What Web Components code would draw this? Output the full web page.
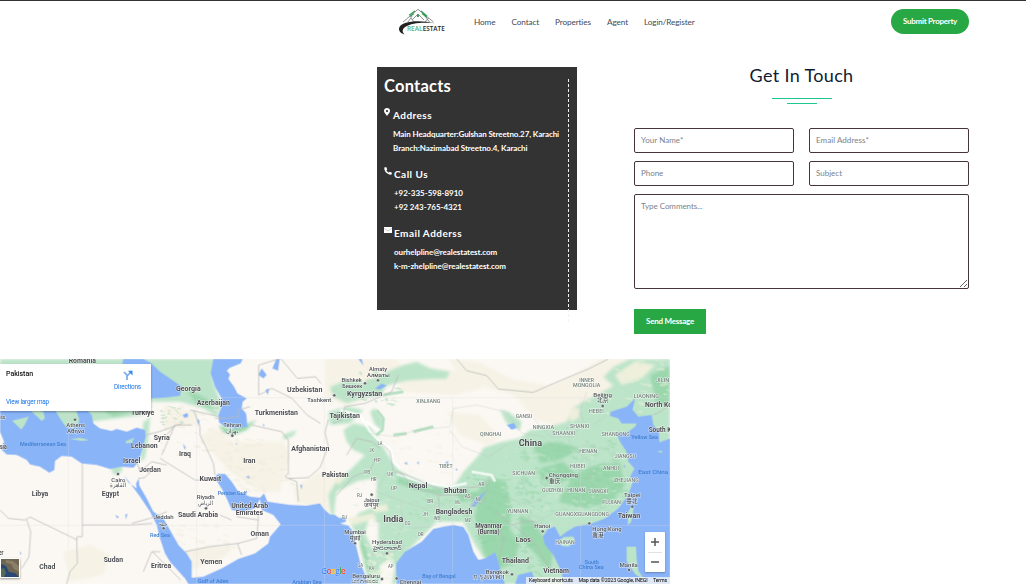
<!DOCTYPE html>
<html lang="en">
<head>
<meta charset="utf-8">
<title>Real Estate - Contact</title>
<style>
html,body{margin:0;padding:0;background:#fff}
body{font-family:Lato,"Open Sans",sans-serif;width:1026px;height:584px;overflow:hidden;color:#333}
</style>
</head>
<body>
<contact-page></contact-page>
<script>
// Text run whose tracking is adjusted to fill a given width.
class FitText extends HTMLElement{
  connectedCallback(){
    const w=parseFloat(this.getAttribute('w'));
    const r=this.attachShadow({mode:'open'});
    r.innerHTML=`<style>:host{display:inline-block;width:${w}px;white-space:nowrap}span{display:inline-block}</style><span><slot></slot></span>`;
    const s=r.querySelector('span');
    const n=this.textContent.length;
    s.style.letterSpacing='0px';
    const natural=s.getBoundingClientRect().width;
    s.style.letterSpacing=((w-natural)/n)+'px';
  }
}
customElements.define('fit-text',FitText);

const define=(name,html)=>customElements.define(name,class extends HTMLElement{
  constructor(){super();this.attachShadow({mode:'open'}).innerHTML=html;}
});

define('brand-logo',`<style>:host{display:block;width:50px;height:28px}svg{display:block}</style>
<svg width="50" height="28" viewBox="0 0 50 28" fill="none">
<path d="M5 14 20 1.300 35.500 14M10 14 14 8M16 14l-3-4M27 14l3.500-4M31.500 14 27 8M14 12l6-6 6 6" stroke="#777" stroke-width=".8"/>
<path d="M11 7.200 17 3M23 3l6 5M12 8.500l4-3M24 5.500l5 4" stroke="#3b9d57" stroke-width="1.100"/>
<path d="M19 6.500h2v2.500H19z" fill="#3b9d57"/>
<path d="M37 15.300C24 12 2 12.300 1 20.500c-.2 3 2.200 5 5.500 6C0 20 12 13 37 15.300Z" fill="#222"/>
<g font-family="Open Sans,sans-serif" font-weight="600" font-size="6.600"><text x="9" y="23.300" textLength="15.500" lengthAdjust="spacingAndGlyphs" fill="#59b36f">REAL</text><text x="24.700" y="23.300" textLength="22" lengthAdjust="spacingAndGlyphs" fill="#222">ESTATE</text></g>
</svg>`);

define('site-header',`<style>
:host{display:flex;align-items:center;box-sizing:border-box;height:42px;margin-bottom:2px;border-top:1px solid #333;padding:0 57px 0 398px}
nav{display:flex;gap:16px;margin-left:26px;font-size:8.200px;line-height:14px;color:#414b55;flex:1}
.btn{box-sizing:border-box;width:78px;height:25px;border:0;border-radius:13px;background:#28a745;color:#fff;font:700 8px/25px Lato,sans-serif;padding:0 12px;text-align:left}
</style>
<brand-logo></brand-logo>
<nav><fit-text w="21.500">Home</fit-text><fit-text w="27.500">Contact</fit-text><fit-text w="36">Properties</fit-text><fit-text w="21">Agent</fit-text><fit-text w="50.500">Login/Register</fit-text></nav>
<button class="btn"><fit-text w="54">Submit Property</fit-text></button>`);

define('contact-group',`<style>
:host{display:grid;grid-template-columns:var(--indent,10px) 1fr;margin-bottom:9px}
.icon{padding-top:3px;height:12px}
h3{margin:0 0 2px;font:700 10px/20px Lato,sans-serif;height:20px}
.lines{grid-column:2;font-weight:700;font-size:8px;line-height:14px;display:flex;flex-direction:column}
</style><div class="icon"><slot name="icon"></slot></div><h3><slot name="title"></slot></h3><div class="lines"><slot></slot></div>`);

define('contacts-panel',`<style>
:host{display:flex;align-items:flex-start;width:200px;height:243px;background:#333;color:#fff}
.body{box-sizing:border-box;width:191px;padding-left:7px}
h2{margin:0;font:700 16.500px/38px Lato,sans-serif}
.rule{margin-top:12px;height:243px;border-left:1px dashed #f2f2f2}
svg{display:block}
contact-group{--indent:10px}contact-group:first-of-type{--indent:9px}
</style>
<div class="body"><h2><fit-text w="67">Contacts</fit-text></h2>
<contact-group><svg slot="icon" width="6" height="8" viewBox="0 0 6 8"><path fill="#fff" fill-rule="evenodd" d="M3 0a3 3 0 0 1 3 3c0 1.800-2 3.200-3 5C2 6.200 0 4.800 0 3a3 3 0 0 1 3-3Zm0 2a1.100 1.100 0 1 0 0 2.200A1.100 1.100 0 0 0 3 2Z"/></svg><fit-text slot="title" w="39">Address</fit-text><fit-text w="166">Main Headquarter:Gulshan Streetno.27, Karachi</fit-text><fit-text w="134.500">Branch:Nazimabad Streetno.4, Karachi</fit-text></contact-group>
<contact-group><svg slot="icon" width="8" height="8" viewBox="0 0 8 8"><path fill="#fff" d="M.3.5 2.200 0l1.100 2.400-1 .9c.5 1 1.300 1.800 2.400 2.400l.9-1L8 5.800 7.500 7.600C3.500 8 0 4.500.3.500Z"/></svg><fit-text slot="title" w="34">Call Us</fit-text><fit-text w="69">+92-335-598-8910</fit-text><fit-text w="68">+92 243-765-4321</fit-text></contact-group>
<contact-group><svg slot="icon" width="8" height="8" viewBox="0 0 8 8"><path fill="#fff" d="M0 1h8v6H0z"/><path d="M0 2.300 4 5l4-2.700" fill="none" stroke="#bbb" stroke-width=".7"/></svg><fit-text slot="title" w="68">Email Adderss</fit-text><fit-text w="103">ourhelpline@realestatest.com</fit-text><fit-text w="112">k-m-zhelpline@realestatest.com</fit-text></contact-group>
</div><div class="rule"></div>`);

define('message-form',`<style>
:host{display:flex;flex-direction:column;width:335px}
h2{align-self:center;margin:0;font:400 18px/24px Lato,sans-serif;color:#101c30}
.bars{display:flex;flex-direction:column;align-items:center;gap:4px;margin:11px 0 24px}
.bars i{height:1px;width:60px;background:#1dc78b}.bars i+i{width:30px}
form{display:grid;grid-template-columns:160px 160px;column-gap:15px;row-gap:8px}
input,textarea{box-sizing:border-box;width:100%;height:25px;margin:0;border:1px solid #453539;border-radius:2px;background:#fff;padding:0 6px 2px;font:8px/14px Lato,sans-serif;outline:0;display:block}
textarea{grid-column:1/3;height:95px;padding:4px 6px}
::placeholder{color:#7b828a;opacity:1}
.send{width:72px;height:25px;border:0;padding:0 12px;margin-top:12px;background:#28a745;color:#fff;font:700 8px/25px Lato,sans-serif;text-align:left}
</style>
<h2><fit-text w="104">Get In Touch</fit-text></h2><div class="bars"><i></i><i></i></div>
<form><input placeholder="Your Name*" style="letter-spacing:.05px"><input placeholder="Email Address*" style="letter-spacing:.05px"><input placeholder="Phone" style="letter-spacing:-.03px"><input placeholder="Subject"><textarea placeholder="Type Comments..." style="letter-spacing:-.05px"></textarea>
<button class="send" type="button"><fit-text w="48">Send Message</fit-text></button></form>`);

// Map labels: [text, left+half width, baseline y, width, style]. Units are thirds of a pixel.
const labels=[
['Romania',247,23,82],['Türkiye',428,180,70],['Syria',485,256,48],['Lebanon',433,280,80],['Israel',395,325,52],['Jordan',450,352,65],['Libya',120,423,50],['Egypt',331,423,52],['Sudan',340,621,58],['Chad',142,643,48],['Eritrea',483,638,60],['sia',10,283,20],['is',9,192,16,'c'],['er',3,600,14],
['Athens',227,216,56,'c'],['Αθήνα',227,234,52,'c'],['Cairo',355,380,42,'c'],['القاهرة',355,397,48,'c'],['Mediterranean Sea',129,273,138,'w'],
['Georgia',565,108,74],['Azerbaijan',640,149,100],['Turkmenistan',829,179,130],['Uzbekistan',914,112,106],['Tashkent',958,141,72,'c'],['Tehran',697,215,54,'c'],['تهران',697,235,38,'c'],['Iraq',555,304,36],['Iran',748,324,37],['Afghanistan',931,288,115],['Kuwait',631,379,65],['Riyadh',617,432,54,'c'],['الرياض',617,450,46,'c'],['Saudi Arabia',594,487,120],['United Arab',749,459,111],['Emirates',748,480,82],['Oman',779,544,55],['Yemen',634,628,66],['Jeddah',491,492,60,'c'],['جدة',490,512,28,'c'],['Persian Gulf',697,420,88,'w'],['Red Sea',480,547,60,'w'],['Gulf of Aden',640,683,92,'w'],['Arabian Sea',921,686,88,'w'],
['Almaty',1134,48,54,'c'],['Алматы',1135,66,68,'c'],['Bishkek',1055,81,61,'c'],['Бишкек',1057,99,60,'c'],['Kyrgyzstan',1094,124,106],['Tajikistan',1034,189,91],['Pakistan',1006,365,80],['XINJIANG',1285,145,72,'r'],['TIBET',1337,339,42,'r'],['Nepal',1254,400,56],['Bhutan',1366,415,68],['Bangladesh',1362,476,110],['India',1180,501,60,'b'],['Jaipur',1115,440,48,'c'],['जयपुर',1114,457,44,'c'],['Mumbai',1065,537,64,'c'],['मुंबई',1065,555,32,'c'],['Hyderabad',1161,567,90,'c'],['హైదరాబాద్',1161,585,86,'c'],['Bengaluru',1098,668,83,'c'],['ಬೆಂಗಳೂರು',1095,683,82,'c'],['Chennai',1231,686,65,'c'],['Bay of Bengal',1317,669,100,'w'],['Myanmar',1466,518,80],['(Burma)',1466,538,66],['Bangkok',1492,656,70,'c'],['กรุงเทพฯ',1466,673,92,'c'],
['LA',1140,270,15,'r'],['HP',1132,322,20,'r'],['PB',1102,357,18,'r'],['UK',1171,362,18,'r'],['HR',1121,379,18,'r'],['UP',1182,405,18,'r'],['RJ',1079,425,16,'r'],['BR',1291,445,18,'r'],['JH',1276,483,16,'r'],['WB',1311,496,18,'r'],['CG',1223,510,18,'r'],['OR',1262,542,18,'r'],['GJ',1033,493,16,'r'],['GA',1081,635,18,'r'],['KA',1115,645,16,'r'],['AP',1172,640,16,'r'],['AR',1444,392,18,'r'],['AS',1403,430,18,'r'],['NL',1435,439,16,'r'],['ML',1374,447,16,'r'],['MZ',1404,502,18,'r'],['JK',1115,290,14,'r'],
['QINGHAI',1472,243,64,'r'],['China',1591,272,70,'b'],['INNER',1760,80,44,'r'],['MONGOLIA',1760,95,82,'r'],['JILIN',1988,80,40,'r'],['LIAONING',1939,130,76,'r'],['Beijing',1808,125,56,'c'],['北京',1808,142,34,'c'],['HEBEI',1789,173,44,'r'],['GANSU',1572,189,50,'r'],['NINGXIA',1630,221,64,'r'],['SHANXI',1739,220,58,'r'],['SHAANXI',1691,239,68,'r'],['SHANDONG',1847,242,84,'r'],['North Korea',1990,155,110],['South Korea',1999,231,106],['Yellow Sea',1934,253,80,'w'],['HENAN',1765,293,54,'r'],['JIANGSU',1876,308,64,'r'],['HUBEI',1733,338,46,'r'],['ANHUI',1833,344,48,'r'],['SICHUAN',1571,359,68,'r'],['Chongqing',1690,365,88,'c'],['重庆',1664,383,34,'c'],['ZHEJIANG',1879,380,74,'r'],['GUIZHOU',1658,412,64,'r'],['HUNAN',1729,412,54,'r'],['JIANGXI',1795,413,58,'r'],['FUJIAN',1835,446,56,'r'],['YUNNAN',1553,474,64,'r'],['GUANGXI',1701,483,70,'r'],['GUANGDONG',1780,483,94,'r'],['East China Sea',1978,357,126,'w'],['Taipei',1897,427,50,'c'],['臺北',1896,445,34,'c'],['Taiwan',1887,490,67],['Hanoi',1627,519,48,'c'],['Hong Kong',1821,528,88,'c'],['香港',1794,545,34,'c'],['HAINAN',1695,567,58,'r'],['Laos',1570,562,45],['Thailand',1546,623,82],['Vietnam',1668,653,77],['South',1775,626,42,'w'],['China Sea',1774,642,74,'w'],['Manila',1886,635,55,'c']];
const dots=[[225,194],[354,357],[697,242],[618,460],[491,520],[1095,85],[1003,121],[1134,76],[1115,419],[1065,565],[1161,595],[1146,672],[1190,670],[1808,153],[1640,369],[1897,455],[1628,529],[1768,505],[1887,645],[1536,658]];
const styles={n:[20.5,700,'#4b4c50'],b:[25,700,'#4b4c50'],c:[18,500,'#4c5054'],r:[14.5,500,'#73807a'],w:[18,500,'#3f7fd0']};
const text=labels.map(([t,x,y,w,k='n'])=>{const s=styles[k];
  return `<text x="${x-w/2}" y="${y}" textLength="${w}" lengthAdjust="spacingAndGlyphs" font-size="${s[0]}" font-weight="${s[1]}" fill="${s[2]}" ${k==='w'?'stroke="none"':''}>${t}</text>`}).join('');
const marks=dots.map(([x,y])=>`<circle cx="${x}" cy="${y}" r="5" fill="#60666a" stroke="#fff" stroke-width="1.500"/>`).join('');
// Small deterministic patches of vegetation and relief.
let seed=7;const rnd=()=>(seed=(seed*16807)%2147483647)/2147483647;
const patches=(n,x,y,w,h,c,s,o)=>{let d='';for(let i=0;i<n;i++){const a=x+rnd()*w,b=y+rnd()*h,u=s*(.5+rnd()),v=s*(.3+rnd()*.6),k=(rnd()-.5)*s;d+=`M${a-u} ${b}q${u*.3} ${-v} ${u} ${-v*.6+k}t${u} ${v*.5-k}q${-u*.5} ${v} ${-u} ${v*.4}t${-u} ${-v*.3}z`}return `<path d="${d}" fill="${c}" opacity="${o}"/>`};
const east="M1390 351 1440 296 1450 278 1505 261 1560 250 1590 225 1640 218 1700 200 1720 158 1750 140 1795 118 1840 92 1810 66 1840 36 1890 12H2010V687H1500L1420 560 1390 500 1310 500 1220 590 1190 687H1105L1080 560 1050 500 995 490 985 420 1005 385 1050 345 1095 300 1060 285 1040 260 1030 225 1060 205 1110 215 1140 260 1170 310 1195 345 1230 365 1290 388 1360 396Z";

define('world-map',`<style>
:host{display:block;position:relative;width:670px;height:225px;overflow:hidden;font-family:Roboto,sans-serif}
svg{display:block}
.place{position:absolute;left:0;top:5px;width:151px;height:47px;box-sizing:border-box;background:#fff;box-shadow:0 1px 2px #0005;display:flex;justify-content:space-between;padding:6px 10px 5px 6px;font-size:6.400px;line-height:8px;color:#1a73e8}
.col{display:flex;flex-direction:column;justify-content:space-between}
.col b{font:500 7px/8px Roboto,sans-serif;color:#111}
.dir{display:flex;flex-direction:column;align-items:center;gap:3px}
.thumb{position:absolute;left:0;top:199px;width:18px;height:18px;border:1.500px solid #fff;box-shadow:0 1px 2px #0006}
.zoom{position:absolute;left:645px;top:173px;width:20px;height:40px;background:#fff;border-radius:1px;box-shadow:0 1px 2px #0004}
.google{position:absolute;left:321px;top:206px;font:600 8.500px/12px "Open Sans",sans-serif;text-shadow:0 0 1px #fff}
.terms{position:absolute;right:0;bottom:0;height:7px;width:144px;background:#f5f5f5c8;box-sizing:border-box;padding:0 3px;display:flex;justify-content:space-between;font-size:5.300px;line-height:7px;color:#000}
</style>
<svg class="map" width="670" height="225" viewBox="0 12 2010 675">
<defs><filter id="soft"><feGaussianBlur stdDeviation="1.500"/></filter><filter id="wash" x="-10%" y="-10%" width="120%" height="120%"><feGaussianBlur stdDeviation="4"/></filter><filter id="type"><feGaussianBlur stdDeviation=".7"/></filter>
<clipPath id="east"><path d="${east}"/></clipPath></defs>
<path fill="#fbf8f3" d="M0 0H2010V700H0z"/>
<g filter="url(#wash)">
<path fill="#f6f2e6" d="M640 215 700 260 850 260 870 300 840 410 780 410 690 350 600 250ZM975 12h210l40 40-60 20-60 60-70 20-60-30ZM1200 60l90-20 100 10 60 50-90 20-160-10ZM1345 12l90 10 100 50 110 20 70-30 90-50 100 0-60 80-70 40-50 60-60 20-60-20-60-70-100-30-50-10ZM490 150l100 20 10 40-110 10ZM560 590l70-20 70 10-30 30-110 40ZM190 590l80-20 60 30-20 60-100 20ZM880 400l80-50 60 30-30 90-100-30ZM1340 170l100 10 60 70-40 20-80-30Z"/>
<path fill="#bce4c9" d="M0 12H640L635 60 650 110 665 150 650 185 610 160 540 140 453 140 430 180 270 200 250 165 0 165ZM990 95l50-20 50 10 60-30 60-25 40-10 40 20 60 10-10 22-50 0-70 5-60 15-20 30-50 8-50 15-40-20ZM985 170l60-15 45 10-40 40-60 5ZM1110 170l15-10 25 35-5 30-20-15ZM430 200l20-10-5 60-10 60-14 10ZM600 12l50 0-12 50-35 20ZM330 336l40-6-8 24-20 6ZM850 240l40-15-10 18-30 12ZM1500 165l25 5 40 30-5 25-40-20Z"/>
<path fill="#bce4c9" d="${east}"/>
<path fill="#fbf8f3" d="M1010 410l65-32 55-8 0 40-5 45-50 20-30 40-45-15 5-50ZM1110 480l25 25 0 60-15 20-25-50ZM1140 630l30-15 15 20-10 52h-35Z"/>
<path fill="#eef0dc" d="M1845 60l60-40 60 10-40 40-60 20ZM1000 370l30-20 15 10-30 30ZM1040 490l80-15 10 15-70 20ZM1110 455l50-8 5 20-40 5ZM1710 160l30 0-5 30-25 10Z"/>
<path fill="#9bd7ad" d="M1440 385l45-15 35 15 15 70-5 70 30 40-20 60-50 20-40-50-25-110ZM1600 270l70-10 70 20-60 35-60 10ZM1620 340l70-20 40 40-50 25-60-10ZM1720 360l50-25 90-15 15 70-40 50-80 20-80-20ZM1195 365l80 30 60 12-10 12-80-15-55-20ZM1370 415l60-5 25-20-25 45-50 5ZM1080 545l15 30 25 80-20-10-20-70ZM1950 60l60-28v110l-40 10ZM1560 480l40 20 60 90-10 60-50-60-40-40ZM560 105l60 25 20 30-50-10ZM655 210l35 12 50-15 30-12-30 30-40 15-30-7ZM310 165l80 10-50 10-20-10Z"/>
</g>
<g filter="url(#soft)">
${patches(30,1000,40,200,110,'#b4dfc2',10,.6)}
<g clip-path="url(#east)">${patches(220,1560,260,330,210,'#8ccf9f',9,.32)}${patches(180,1400,350,230,320,'#8ccf9f',9,.3)}${patches(160,1500,260,400,250,'#d0ebd4',9,.4)}${patches(60,1060,300,300,330,'#d5edd5',9,.45)}${patches(50,1060,560,120,127,'#f1f3e0',9,.6)}${patches(50,1750,12,260,170,'#e3efd6',11,.5)}${patches(50,1230,420,180,80,'#a4dab3',8,.4)}</g>
${patches(55,480,140,220,170,'#eeeada',9,.55)}${patches(70,660,250,220,160,'#f0ecdd',10,.6)}${patches(35,1180,200,230,170,'#f4f0e5',9,.6)}${patches(30,440,150,110,60,'#c2e3c9',6,.7)}${patches(30,510,510,210,100,'#f4f0e6',12,.7)}
<path fill="none" stroke="#fff" stroke-width="8" opacity=".8" d="M1020 165l60 15 30 50 30 30 30 20 10 40 20 20M1100 200l40 30M1190 355l70 25 90 15 50-10M1415 350l60 10 10 20"/>
<path fill="none" stroke="#b8e0c4" stroke-width="9" d="M1130 165l20 25-3 35-18 15M1150 120l60-10M1180 240l40-5M1240 230l60-15"/>
<path fill="#8ab4f8" d="M0 165V230L12 260 5 285 20 298 50 300 80 315 90 328 120 335 148 353 163 345 165 318 185 303 215 305 245 325 290 330 330 342 365 335 400 338 412 325 422 300 430 270 437 245 435 225 410 218 380 230 350 222 335 228 300 220 280 205 275 180 260 165ZM370 12H430L453 24 480 50 510 70 545 95 540 122 500 127 453 130 400 120 360 60ZM640 12 632 55 645 95 665 130 665 155 655 180 657 202 675 215 705 220 742 215 740 190 738 175 725 160 728 140 740 130 712 115 702 95 685 72 690 58 680 47 690 38 722 25 728 12ZM372 360l13 22 25 18-2-15 8-15 2 22 22 38 20 40 30 20 20 35 25 45 25 25 15 25 0 70-25-25-40-45-15-25-15-45-10-40-20-40-30-45Z"/>
<path fill="#8ab4f8" d="M565 687 555 670 610 665 665 640 715 612 765 595 805 565 810 545 842 508 820 480 785 465 780 432 765 460 730 470 695 465 680 430 665 400 645 370 652 357 675 357 695 380 715 410 750 425 780 428 792 415 802 440 870 450 920 452 960 445 970 460 990 478 1005 480 1025 495 1035 480 1038 500 1020 505 1045 512 1060 530 1070 580 1080 620 1095 660 1103 687ZM1190 687 1188 625 1215 590 1265 560 1300 522 1330 515 1360 510 1390 516 1405 540 1420 590 1435 615 1455 610 1475 598 1485 592 1495 620 1505 660 1515 687ZM1545 687 1555 660 1595 650 1610 687ZM1690 687 1685 650 1660 600 1635 570 1628 545 1645 520 1665 515 1680 545 1700 530 1725 515 1775 505 1815 490 1855 460 1885 420 1900 375 1890 365 1903 340 1885 320 1880 290 1860 260 1850 235 1885 230 1905 215 1910 205 1865 205 1855 190 1830 183 1832 170 1880 155 1905 130 1898 165 1915 185 1955 180 1960 210 1977 230 1978 262 2010 250V687ZM775 60l10-20 15 20-10 10ZM817 40l12-28 10 0-5 35ZM1075 12l15 20-5-20ZM1125 100l20-14 15 5-20 12ZM796 105l12-5-5 20ZM1520 210l22-6 8 15-15 5ZM1010 490l20-3 2 10-20 5ZM1415 455l10-20 35-30-35 50ZM590 190l9 8-3 15ZM548 180l14-6 3 10-12 5Z"/>
<path fill="#bce4c9" d="M110 165l20 5 5 20-10 8-35-33ZM165 165l15 25 15 22 22 8 20-18 0-12-10-27ZM36 197l50-12-12 25-10 14ZM210 252l30-3 28 6-22 3ZM376 259l27-11-8 14-15 3ZM1675 560l15-14 30-2 5 14-20 17-20-2ZM1895 453l-10 17-2 40 10-8 8-44ZM1880 575l28 0 2 35 5 37 20 30-30-20-25-38ZM1972 290l15-4-4 8Z"/>
<path fill="#6fa3ed" opacity=".7" d="M60 590h3v9h-3zM345 480l12 5-5 6ZM375 480l8-5-5 18ZM1212 325l8-4 3 8ZM1250 323l6-4 1 10ZM1335 322l9-4 2 12ZM1365 343l7-3-1 8ZM705 265l6 0 1 5ZM737 366l10-4 2 9ZM900 390l7 0-2 14ZM548 265l6 20 4-8ZM790 205l4 8-6 0ZM1870 330l6 2-2 8Z"/>
<g fill="none" stroke="#b9bbb9" stroke-width="2.300" stroke-linejoin="round">
<path d="M247 325V510M90 486 230 554 232 625 210 650 200 687M0 465l25 25 50 5 15-9M80 495l12 35-5 75-22 35M247 510h145M247 510v35h-16v10M392 510l65-5M437 240l40-10 70-25M412 325l8 25 35-30 45 10M480 310l105 65 50 0M415 370l18-2 17-15-35-15M500 240l25-30 50 0M525 210l-40 90M580 165l20 50 0 25 20 40 20 45 5 35M645 190l30 0 40-5 0-20 35-10M570 165l90 20M555 590l75-15 85-10 55-15 5-55-65-10M712 565l13 35M775 495l0-25M776 30v90l40-20 60 30 45 50 40 25M777 30l65-20 50 60 55-5 15 20M755 210l90 20 20 25 0 100-10 10 35 15 5 60M865 370l60-2 35-30 25-65-10-40 10-40M1000 205l25-10 10-40 60-10 80-35 20-50M1040 300l30-50 45 10 25 20M1010 420l50-55 50-20 20-40M1150 270l20 20 10 60 30 10 20 35 90 25 60 0M1190 348l130 55 120-8 30-30M1315 420l5 80M1370 420l50 10-20 60M1370 12l30 35 60 15 35 40 105 10 80-35 85-35 60-30M1470 370l-20 70-35 10M1485 470l50 40 50-15 60 20M1540 510l60 50 50 80M1500 520l10 40-15 50M1960 180l30-15 20-20M457 590l35 35 50 50M430 650l25-60 25 0M500 470l-50 20-55 15M660 480l35 15"/>
<path opacity=".55" stroke-width="1.500" d="M1100 235l90 10 60-20 100-10 10-55 70-10 85 20M1350 225l35 50 80 30 55-35M1520 170l45 65 65 10 45 45M1600 190l50 55 70 0 25-40M1700 215l10 60 60 45 0 60 60 60M1620 350l60 55 60-10 60 15M1500 420l80 30 60-30M1540 470l90 20 60-30M1740 270l85 15 25 45M1800 330l-50 60M1160 350l-30 60 80 30 60 20 65-10M1120 500l90-10 25 30 60-5M1200 440l10 70-30 60M1110 600l70-10 35-20M1760 110l-20 60 20 50M1840 170l-60 40"/>
</g>
</g>
<path d="M0 511H2010M205 165V580M590 128V687M973 128V687M1358 128V687M1742 128V687M600 128H2010" stroke="#d9dfe0" stroke-width="1.500" opacity=".6" fill="none"/>
<g filter="url(#type)"><g font-family="Roboto,'Noto Sans','Noto Sans CJK SC',sans-serif" stroke="#fff" stroke-opacity=".7" stroke-width="3" paint-order="stroke" stroke-linejoin="round">${text}</g>${marks}</g>
</svg>
<div class="place"><div class="col"><b><fit-text w="27">Pakistan</fit-text></b><fit-text w="43">View larger map</fit-text></div>
<div class="dir"><svg width="10" height="10" viewBox="0 0 10 10"><path d="M1 2l3 3.200V10M4 6l3.500-3.500" stroke="#78a9ec" stroke-width="1.700" fill="none"/><path d="M5 .800h4.500V5.500Z" fill="#3a86ea"/></svg><fit-text w="27">Directions</fit-text></div></div>
<svg class="thumb" viewBox="0 0 18 18"><path fill="#6d6654" d="M0 0h18v18H0z"/><path d="M0 5l5 2 3 6 6 1 4 4H0z" fill="#2a4674"/><path d="M5 1l7 1 6 5v6l-5-3-3-5-5-1z" fill="#8b7d66"/><path d="M0 10l3-1 2 5-2 4H0z" fill="#536b58"/></svg>
<div class="google"><fit-text w="24"><span style="color:#4285f4">G</span><span style="color:#ea4335">o</span><span style="color:#fbbc05">o</span><span style="color:#4285f4">g</span><span style="color:#34a853">l</span><span style="color:#ea4335">e</span></fit-text></div>
<svg class="zoom" viewBox="0 0 20 40"><path d="M3 20.500h14" stroke="#e2e2e2"/><path d="M6 10h8M10 6v8M6 30h8" stroke="#555" stroke-width="1.500"/></svg>
<div class="terms"><fit-text w="44">Keyboard shortcuts</fit-text><fit-text w="69">Map data ©2023 Google, INEGI</fit-text><fit-text w="14">Terms</fit-text></div>`);

define('contact-page',`<style>
:host{display:block;width:1026px;height:584px;overflow:hidden}
main{display:flex;align-items:flex-start;gap:57px;height:315px;box-sizing:border-box;padding-left:377px}
contacts-panel{margin-top:23px}message-form{margin-top:19px}
</style><site-header></site-header><main><contacts-panel></contacts-panel><message-form></message-form></main><world-map></world-map>`);
</script>
</body>
</html>
